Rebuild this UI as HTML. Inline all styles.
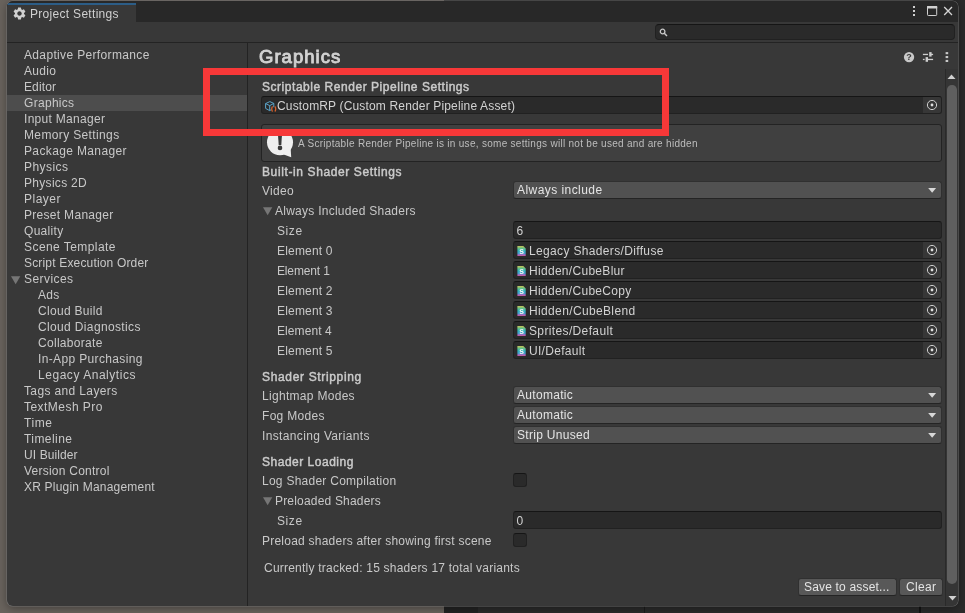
<!DOCTYPE html>
<html><head><meta charset="utf-8"><title>Project Settings</title>
<style>
html,body{margin:0;padding:0;}
body{width:965px;height:613px;overflow:hidden;background:#2b2b2b;position:relative;font-family:"Liberation Sans",sans-serif;font-size:12px;color:#c8c8c8;}
.abs{position:absolute;}
.t{position:absolute;white-space:nowrap;line-height:16px;height:16px;}
.b{font-weight:normal;color:#cacaca;-webkit-text-stroke:0.45px #cacaca;}
.fld{position:absolute;background:#2a2a2a;border:1px solid #212121;border-top-color:#151515;border-radius:3px;box-sizing:border-box;}
.dd{position:absolute;background:#515151;border:1px solid #303030;border-bottom-color:#242424;border-radius:3px;box-sizing:border-box;}
.btn{position:absolute;background:#585858;border:1px solid #303030;border-bottom-color:#242424;border-radius:3px;box-sizing:border-box;}
.chk{position:absolute;background:#2a2a2a;border:1px solid #212121;border-top-color:#151515;border-radius:3px;box-sizing:border-box;width:14px;height:14px;}
</style></head><body>

<div class="abs" style="left:0;top:0;width:444px;height:613px;background:#69635d;"></div>
<div class="abs" style="left:444px;top:0;width:521px;height:613px;background:#2b2b2b;"></div>
<div class="abs" style="left:444px;top:607px;width:34px;height:6px;background:#232323;"></div>
<div class="abs" style="left:919px;top:606px;width:2px;height:7px;background:#141414;"></div>
<div class="abs" style="left:644px;top:606px;width:1px;height:7px;background:#1c1c1c;"></div>
<div class="abs" id="win" style="will-change:transform;left:7px;top:1px;width:951.400px;height:605.400px;background:#383838;border-radius:6px;overflow:hidden;box-shadow:0 0 0 0.6px rgba(125,125,125,0.75),0 2px 10px rgba(0,0,0,0.4);">
<div class="abs" style="left:0;top:0;width:951px;height:20.6px;background:#282828;"></div>
<svg width="0" height="0" style="position:absolute"><defs><linearGradient id="sg" x1="0" y1="0" x2="0" y2="1"><stop offset="0" stop-color="#c4c456"/><stop offset="0.25" stop-color="#62c088"/><stop offset="0.5" stop-color="#2eb2c0"/><stop offset="0.75" stop-color="#4a9ccc"/><stop offset="0.86" stop-color="#9a6cc0"/><stop offset="1" stop-color="#cc589c"/></linearGradient></defs></svg>
<div class="abs" style="left:0px;top:2px;width:129px;height:19px;background:#383838;border-top:2px solid #2c5d87;box-sizing:border-box;"></div>
<div id="t1" class="t" style="left:23px;top:5px;letter-spacing:0.300px;color:#d0d0d0;">Project Settings</div>
<svg class="abs" style="left:5.300000000000001px;top:4.6px" width="15" height="15" viewBox="0 0 24 24"><path fill="#d0d0d0" d="M19.14 12.94c.04-.3.06-.61.06-.94 0-.32-.02-.64-.07-.94l2.03-1.58a.49.49 0 0 0 .12-.61l-1.92-3.32a.488.488 0 0 0-.59-.22l-2.39.96c-.5-.38-1.03-.7-1.62-.94l-.36-2.54a.484.484 0 0 0-.48-.41h-3.84c-.24 0-.43.17-.47.41l-.36 2.54c-.59.24-1.13.57-1.62.94l-2.39-.96c-.22-.08-.47 0-.59.22L2.74 8.87c-.12.21-.08.47.12.61l2.03 1.58c-.05.3-.09.63-.09.94s.02.64.07.94l-2.03 1.58a.49.49 0 0 0-.12.61l1.92 3.32c.12.22.37.29.59.22l2.39-.96c.5.38 1.03.7 1.62.94l.36 2.54c.05.24.24.41.48.41h3.84c.24 0 .44-.17.47-.41l.36-2.54c.59-.24 1.13-.56 1.62-.94l2.39.96c.22.08.47 0 .59-.22l1.92-3.32c.12-.22.07-.47-.12-.61l-2.01-1.58zM12 15.6c-1.98 0-3.600-1.62-3.600-3.600s1.620-3.600 3.600-3.600 3.600 1.620 3.600 3.600-1.620 3.600-3.600 3.600z"/></svg>
<svg class="abs" style="left:901px;top:3px" width="47" height="16" viewBox="0 0 47 16"><g fill="#d0d0d0"><rect x="5" y="2" width="2" height="2"/><rect x="5" y="6" width="2" height="2"/><rect x="5" y="10" width="2" height="2"/></g><rect x="19.500" y="2.500" width="9.200" height="9" rx="0.800" fill="none" stroke="#d0d0d0" stroke-width="1"/><rect x="19" y="2" width="10.200" height="2.600" rx="0.500" fill="#d0d0d0"/><path d="M36.200 3 L44 11 M44 3 L36.200 11" stroke="#d4d4d4" stroke-width="1.300" fill="none"/></svg>
<div class="fld" style="left:648px;top:23px;width:300px;height:16px;border-radius:4px;"></div>
<svg class="abs" style="left:652px;top:27px" width="10" height="10" viewBox="0 0 10 10"><circle cx="3.600" cy="3.500" r="2.300" fill="none" stroke="#c8c8c8" stroke-width="1.300"/><path d="M5.300 5.300 L8 8" stroke="#c8c8c8" stroke-width="1.500"/></svg>
<div class="abs" style="left:0;top:41px;width:951px;height:1px;background:#232323;"></div>
<div class="abs" style="left:240px;top:42px;width:1px;height:564px;background:#232323;"></div>
<div id="t2" class="t" style="left:17px;top:46px;letter-spacing:0.347px;">Adaptive Performance</div>
<div id="t3" class="t" style="left:17px;top:62px;letter-spacing:0.300px;">Audio</div>
<div id="t4" class="t" style="left:17px;top:78px;letter-spacing:0.120px;">Editor</div>
<div class="abs" style="left:0;top:94px;width:240px;height:16px;background:#4d4d4d;"></div>
<div id="t5" class="t" style="left:17px;top:94px;letter-spacing:0.300px;">Graphics</div>
<div id="t6" class="t" style="left:17px;top:110px;letter-spacing:0.300px;">Input Manager</div>
<div id="t7" class="t" style="left:17px;top:126px;letter-spacing:0.364px;">Memory Settings</div>
<div id="t8" class="t" style="left:17px;top:142px;letter-spacing:0.364px;">Package Manager</div>
<div id="t9" class="t" style="left:17px;top:158px;letter-spacing:0.450px;">Physics</div>
<div id="t10" class="t" style="left:17px;top:174px;letter-spacing:0.300px;">Physics 2D</div>
<div id="t11" class="t" style="left:17px;top:190px;letter-spacing:0.480px;">Player</div>
<div id="t12" class="t" style="left:17px;top:206px;letter-spacing:0.300px;">Preset Manager</div>
<div id="t13" class="t" style="left:17px;top:222px;letter-spacing:0.300px;">Quality</div>
<div id="t14" class="t" style="left:17px;top:238px;letter-spacing:0.438px;">Scene Template</div>
<div id="t15" class="t" style="left:17px;top:254px;letter-spacing:0.171px;">Script Execution Order</div>
<div id="t16" class="t" style="left:17px;top:270px;letter-spacing:0.429px;">Services</div>
<svg class="abs" style="left:3.8000000000000007px;top:275px" width="10" height="9" viewBox="0 0 10 9"><path d="M0 0.300 L9.300 0.300 L4.650 8.300 Z" fill="#767676"/></svg>
<div id="t17" class="t" style="left:31px;top:286px;letter-spacing:0.300px;">Ads</div>
<div id="t18" class="t" style="left:31px;top:302px;letter-spacing:0.300px;">Cloud Build</div>
<div id="t19" class="t" style="left:31px;top:318px;letter-spacing:0.356px;">Cloud Diagnostics</div>
<div id="t20" class="t" style="left:31px;top:334px;letter-spacing:0.300px;">Collaborate</div>
<div id="t21" class="t" style="left:31px;top:350px;letter-spacing:0.356px;">In-App Purchasing</div>
<div id="t22" class="t" style="left:31px;top:366px;letter-spacing:0.540px;">Legacy Analytics</div>
<div id="t23" class="t" style="left:17px;top:382px;letter-spacing:0.364px;">Tags and Layers</div>
<div id="t24" class="t" style="left:17px;top:398px;letter-spacing:0.464px;">TextMesh Pro</div>
<div id="t25" class="t" style="left:17px;top:414px;letter-spacing:0.600px;">Time</div>
<div id="t26" class="t" style="left:17px;top:430px;letter-spacing:0.429px;">Timeline</div>
<div id="t27" class="t" style="left:17px;top:446px;letter-spacing:0.100px;">UI Builder</div>
<div id="t28" class="t" style="left:17px;top:462px;letter-spacing:0.236px;">Version Control</div>
<div id="t29" class="t" style="left:17px;top:478px;letter-spacing:0.205px;">XR Plugin Management</div>
<div id="t30" class="t" style="left:251.6px;top:44px;letter-spacing:0.943px;font-size:17.5px;font-weight:normal;-webkit-text-stroke:0.85px #d2d2d2;display:inline-block;transform:scaleX(1.06);transform-origin:0 0;line-height:24px;height:24px;color:#d2d2d2;">Graphics</div>
<svg class="abs" style="left:893px;top:48px" width="54" height="16" viewBox="0 0 54 16"><circle cx="9.050" cy="8.050" r="5.150" fill="#c8c8c8"/><text x="9.050" y="11.300" font-size="9" font-weight="bold" text-anchor="middle" fill="#383838" font-family='"Liberation Sans",sans-serif'>?</text><g fill="#cdcdcd"><rect x="22.900" y="4.800" width="5.100" height="1.300"/><rect x="29.200" y="3.100" width="2.400" height="4.500"/><rect x="31" y="4.800" width="2.100" height="1.300"/><rect x="22.900" y="9.800" width="1.700" height="1.300"/><rect x="25.600" y="8.100" width="2.400" height="4.700"/><rect x="27.500" y="9.800" width="5.600" height="1.300"/></g><g fill="#c8c8c8"><rect x="45.600" y="3.100" width="2.600" height="2.100"/><rect x="45.600" y="7" width="2.600" height="2.100"/><rect x="45.600" y="10.900" width="2.600" height="2.100"/></g></svg>
<div id="t31" class="t b" style="left:255px;top:78px;letter-spacing:0.538px;">Scriptable Render Pipeline Settings</div>
<div class="fld" style="left:254px;top:95px;width:681px;height:18px;"></div>
<div class="abs" style="left:916px;top:96px;width:18px;height:16px;background:#373737;border-radius:0 2px 2px 0;"></div>
<svg class="abs" style="left:919px;top:98px" width="12" height="12" viewBox="0 0 12 12"><circle cx="6" cy="6" r="4.600" fill="none" stroke="#d0d0d0" stroke-width="1"/><circle cx="6" cy="6" r="1.400" fill="#e0e0e0"/></svg>
<svg class="abs" style="left:258px;top:99.5px" width="12" height="11" viewBox="0 0 12 11"><path d="M4.800 0.600 L8.800 2.400 V6.200 M6 8.800 L4.600 9.600 L0.600 7.400 V2.600 L4.800 0.600 M0.600 2.600 L4.700 4.600 L8.800 2.400 M4.700 4.600 V9.600" fill="none" stroke="#5ba4c9" stroke-width="1" stroke-linejoin="round"/><path d="M7.600 5.600 C6.400 6.600 6.400 9.400 7.600 10.400 M9.800 5.600 C11 6.600 11 9.400 9.800 10.400" fill="none" stroke="#d8612c" stroke-width="1.300"/></svg>
<div id="t32" class="t" style="left:270px;top:97px;letter-spacing:0.158px;color:#d2d2d2;">CustomRP (Custom Render Pipeline Asset)</div>
<div class="abs" style="left:254px;top:123px;width:681px;height:38px;background:#404040;border:1px solid #232323;border-radius:3px;box-sizing:border-box;"></div>
<svg class="abs" style="left:257px;top:125px" width="32" height="34" viewBox="0 0 32 34"><circle cx="16" cy="16.300" r="13" fill="#efefef"/><path d="M17 27.500 L27.200 31.200 L26.600 22 Z" fill="#efefef"/><path d="M13.800 6 H18.200 L17.300 19 H14.700 Z" fill="#3a3a3a"/><circle cx="16" cy="21.900" r="2.300" fill="#3a3a3a"/></svg>
<div id="t33" class="t" style="left:291px;top:135px;letter-spacing:0.289px;font-size:10px;color:#bdbdbd;">A Scriptable Render Pipeline is in use, some settings will not be used and are hidden</div>
<div id="t34" class="t b" style="left:255px;top:163px;letter-spacing:0.613px;">Built-in Shader Settings</div>
<div id="t35" class="t" style="left:255px;top:182px;letter-spacing:0.300px;">Video</div>
<div class="dd" style="left:506px;top:180px;width:429px;height:18px;"></div>
<div id="t36" class="t" style="left:510px;top:181px;letter-spacing:0.438px;color:#e4e4e4;">Always include</div>
<svg class="abs" style="left:920px;top:186px" width="10" height="6" viewBox="0 0 10 6"><path d="M1.200 1.100 H9.100 L5.150 5.700 Z" fill="#d8d8d8"/></svg>
<svg class="abs" style="left:255.89999999999998px;top:206px" width="10" height="9" viewBox="0 0 10 9"><path d="M0 0.300 L9.300 0.300 L4.650 8.300 Z" fill="#767676"/></svg>
<div id="t37" class="t" style="left:268px;top:202px;letter-spacing:0.259px;">Always Included Shaders</div>
<div id="t38" class="t" style="left:270px;top:222px;letter-spacing:0.600px;">Size</div>
<div class="fld" style="left:506px;top:220px;width:429px;height:18px;"></div>
<div id="t39" class="t" style="left:509.6px;top:222px;letter-spacing:0.300px;color:#d2d2d2;">6</div>
<div id="t40" class="t" style="left:270px;top:242px;letter-spacing:0.187px;">Element 0</div>
<div class="fld" style="left:506px;top:240px;width:429px;height:18px;"></div>
<div class="abs" style="left:916px;top:241px;width:18px;height:16px;background:#373737;border-radius:0 2px 2px 0;"></div>
<svg class="abs" style="left:919px;top:243px" width="12" height="12" viewBox="0 0 12 12"><circle cx="6" cy="6" r="4.600" fill="none" stroke="#d0d0d0" stroke-width="1"/><circle cx="6" cy="6" r="1.400" fill="#e0e0e0"/></svg>
<svg class="abs" style="left:510.29999999999995px;top:245px" width="9" height="10" viewBox="0 0 9 10"><path d="M0.400 0 H6.300 L8.700 2.400 V10 H0.400 Z" fill="url(#sg)"/><text x="4.600" y="7.900" font-size="8.500" font-weight="bold" text-anchor="middle" fill="#f2f6f6" font-family='"Liberation Sans",sans-serif'>s</text></svg>
<div id="t41" class="t" style="left:522px;top:242px;letter-spacing:0.343px;color:#d2d2d2;">Legacy Shaders/Diffuse</div>
<div id="t42" class="t" style="left:270px;top:262px;letter-spacing:-0.150px;">Element 1</div>
<div class="fld" style="left:506px;top:260px;width:429px;height:18px;"></div>
<div class="abs" style="left:916px;top:261px;width:18px;height:16px;background:#373737;border-radius:0 2px 2px 0;"></div>
<svg class="abs" style="left:919px;top:263px" width="12" height="12" viewBox="0 0 12 12"><circle cx="6" cy="6" r="4.600" fill="none" stroke="#d0d0d0" stroke-width="1"/><circle cx="6" cy="6" r="1.400" fill="#e0e0e0"/></svg>
<svg class="abs" style="left:510.29999999999995px;top:265px" width="9" height="10" viewBox="0 0 9 10"><path d="M0.400 0 H6.300 L8.700 2.400 V10 H0.400 Z" fill="url(#sg)"/><text x="4.600" y="7.900" font-size="8.500" font-weight="bold" text-anchor="middle" fill="#f2f6f6" font-family='"Liberation Sans",sans-serif'>s</text></svg>
<div id="t43" class="t" style="left:522px;top:262px;letter-spacing:0.300px;color:#d2d2d2;">Hidden/CubeBlur</div>
<div id="t44" class="t" style="left:270px;top:282px;letter-spacing:0.187px;">Element 2</div>
<div class="fld" style="left:506px;top:280px;width:429px;height:18px;"></div>
<div class="abs" style="left:916px;top:281px;width:18px;height:16px;background:#373737;border-radius:0 2px 2px 0;"></div>
<svg class="abs" style="left:919px;top:283px" width="12" height="12" viewBox="0 0 12 12"><circle cx="6" cy="6" r="4.600" fill="none" stroke="#d0d0d0" stroke-width="1"/><circle cx="6" cy="6" r="1.400" fill="#e0e0e0"/></svg>
<svg class="abs" style="left:510.29999999999995px;top:285px" width="9" height="10" viewBox="0 0 9 10"><path d="M0.400 0 H6.300 L8.700 2.400 V10 H0.400 Z" fill="url(#sg)"/><text x="4.600" y="7.900" font-size="8.500" font-weight="bold" text-anchor="middle" fill="#f2f6f6" font-family='"Liberation Sans",sans-serif'>s</text></svg>
<div id="t45" class="t" style="left:522px;top:282px;letter-spacing:0.300px;color:#d2d2d2;">Hidden/CubeCopy</div>
<div id="t46" class="t" style="left:270px;top:302px;letter-spacing:0.187px;">Element 3</div>
<div class="fld" style="left:506px;top:300px;width:429px;height:18px;"></div>
<div class="abs" style="left:916px;top:301px;width:18px;height:16px;background:#373737;border-radius:0 2px 2px 0;"></div>
<svg class="abs" style="left:919px;top:303px" width="12" height="12" viewBox="0 0 12 12"><circle cx="6" cy="6" r="4.600" fill="none" stroke="#d0d0d0" stroke-width="1"/><circle cx="6" cy="6" r="1.400" fill="#e0e0e0"/></svg>
<svg class="abs" style="left:510.29999999999995px;top:305px" width="9" height="10" viewBox="0 0 9 10"><path d="M0.400 0 H6.300 L8.700 2.400 V10 H0.400 Z" fill="url(#sg)"/><text x="4.600" y="7.900" font-size="8.500" font-weight="bold" text-anchor="middle" fill="#f2f6f6" font-family='"Liberation Sans",sans-serif'>s</text></svg>
<div id="t47" class="t" style="left:522px;top:302px;letter-spacing:0.360px;color:#d2d2d2;">Hidden/CubeBlend</div>
<div id="t48" class="t" style="left:270px;top:322px;letter-spacing:0.075px;">Element 4</div>
<div class="fld" style="left:506px;top:320px;width:429px;height:18px;"></div>
<div class="abs" style="left:916px;top:321px;width:18px;height:16px;background:#373737;border-radius:0 2px 2px 0;"></div>
<svg class="abs" style="left:919px;top:323px" width="12" height="12" viewBox="0 0 12 12"><circle cx="6" cy="6" r="4.600" fill="none" stroke="#d0d0d0" stroke-width="1"/><circle cx="6" cy="6" r="1.400" fill="#e0e0e0"/></svg>
<svg class="abs" style="left:510.29999999999995px;top:325px" width="9" height="10" viewBox="0 0 9 10"><path d="M0.400 0 H6.300 L8.700 2.400 V10 H0.400 Z" fill="url(#sg)"/><text x="4.600" y="7.900" font-size="8.500" font-weight="bold" text-anchor="middle" fill="#f2f6f6" font-family='"Liberation Sans",sans-serif'>s</text></svg>
<div id="t49" class="t" style="left:522px;top:322px;letter-spacing:0.364px;color:#d2d2d2;">Sprites/Default</div>
<div id="t50" class="t" style="left:270px;top:342px;letter-spacing:0.187px;">Element 5</div>
<div class="fld" style="left:506px;top:340px;width:429px;height:18px;"></div>
<div class="abs" style="left:916px;top:341px;width:18px;height:16px;background:#373737;border-radius:0 2px 2px 0;"></div>
<svg class="abs" style="left:919px;top:343px" width="12" height="12" viewBox="0 0 12 12"><circle cx="6" cy="6" r="4.600" fill="none" stroke="#d0d0d0" stroke-width="1"/><circle cx="6" cy="6" r="1.400" fill="#e0e0e0"/></svg>
<svg class="abs" style="left:510.29999999999995px;top:345px" width="9" height="10" viewBox="0 0 9 10"><path d="M0.400 0 H6.300 L8.700 2.400 V10 H0.400 Z" fill="url(#sg)"/><text x="4.600" y="7.900" font-size="8.500" font-weight="bold" text-anchor="middle" fill="#f2f6f6" font-family='"Liberation Sans",sans-serif'>s</text></svg>
<div id="t51" class="t" style="left:522px;top:342px;letter-spacing:0.300px;color:#d2d2d2;">UI/Default</div>
<div id="t52" class="t b" style="left:255px;top:368px;letter-spacing:0.660px;">Shader Stripping</div>
<div id="t53" class="t" style="left:255px;top:387px;letter-spacing:0.300px;">Lightmap Modes</div>
<div class="dd" style="left:506px;top:385px;width:429px;height:18px;"></div>
<div id="t54" class="t" style="left:510px;top:386px;letter-spacing:0.300px;color:#e4e4e4;">Automatic</div>
<svg class="abs" style="left:920px;top:391px" width="10" height="6" viewBox="0 0 10 6"><path d="M1.200 1.100 H9.100 L5.150 5.700 Z" fill="#d8d8d8"/></svg>
<div id="t55" class="t" style="left:255px;top:407px;letter-spacing:0.300px;">Fog Modes</div>
<div class="dd" style="left:506px;top:405px;width:429px;height:18px;"></div>
<div id="t56" class="t" style="left:510px;top:406px;letter-spacing:0.300px;color:#e4e4e4;">Automatic</div>
<svg class="abs" style="left:920px;top:411px" width="10" height="6" viewBox="0 0 10 6"><path d="M1.200 1.100 H9.100 L5.150 5.700 Z" fill="#d8d8d8"/></svg>
<div id="t57" class="t" style="left:255px;top:427px;letter-spacing:0.350px;">Instancing Variants</div>
<div class="dd" style="left:506px;top:425px;width:429px;height:18px;"></div>
<div id="t58" class="t" style="left:510px;top:426px;letter-spacing:0.300px;color:#e4e4e4;">Strip Unused</div>
<svg class="abs" style="left:920px;top:431px" width="10" height="6" viewBox="0 0 10 6"><path d="M1.200 1.100 H9.100 L5.150 5.700 Z" fill="#d8d8d8"/></svg>
<div id="t59" class="t b" style="left:255px;top:453px;letter-spacing:0.508px;">Shader Loading</div>
<div id="t60" class="t" style="left:255px;top:472px;letter-spacing:0.257px;">Log Shader Compilation</div>
<div class="chk" style="left:506px;top:472px;"></div>
<svg class="abs" style="left:255.89999999999998px;top:496px" width="10" height="9" viewBox="0 0 10 9"><path d="M0 0.300 L9.300 0.300 L4.650 8.300 Z" fill="#767676"/></svg>
<div id="t61" class="t" style="left:268px;top:492px;letter-spacing:0.187px;">Preloaded Shaders</div>
<div id="t62" class="t" style="left:270px;top:512px;letter-spacing:0.600px;">Size</div>
<div class="fld" style="left:506px;top:510px;width:429px;height:18px;"></div>
<div id="t63" class="t" style="left:509.6px;top:512px;letter-spacing:0.300px;color:#d2d2d2;">0</div>
<div id="t64" class="t" style="left:255px;top:532px;letter-spacing:0.232px;">Preload shaders after showing first scene</div>
<div class="chk" style="left:506px;top:532px;"></div>
<div id="t65" class="t" style="left:257px;top:559px;letter-spacing:0.222px;">Currently tracked: 15 shaders 17 total variants</div>
<div class="btn" style="left:791px;top:577px;width:99px;height:18px;"></div>
<div id="t66" class="t" style="left:797px;top:578px;letter-spacing:0.180px;color:#e4e4e4;">Save to asset...</div>
<div class="btn" style="left:892px;top:577px;width:44px;height:18px;"></div>
<div id="t67" class="t" style="left:899px;top:578px;letter-spacing:0.300px;color:#e4e4e4;">Clear</div>
<div class="abs" style="left:938px;top:68px;width:13px;height:537px;background:#353535;border-left:1px solid #2a2a2a;box-sizing:border-box;"></div>
<div class="abs" style="left:940px;top:84px;width:9.700px;height:499px;background:#5f5f5f;border-radius:4.800px;"></div>
<svg class="abs" style="left:940.4px;top:73px" width="9" height="6" viewBox="0 0 9 6"><path d="M4.500 0.500 L8.500 5 H0.500 Z" fill="#d0d0d0"/></svg>
<svg class="abs" style="left:940.5px;top:594.2px" width="9" height="6" viewBox="0 0 9 6"><path d="M4.500 5.500 L8.500 1 H0.500 Z" fill="#d0d0d0"/></svg>
</div>
<div class="abs" style="left:203px;top:68px;width:466px;height:68px;border:7px solid #f73838;box-sizing:border-box;"></div>
</body></html>
